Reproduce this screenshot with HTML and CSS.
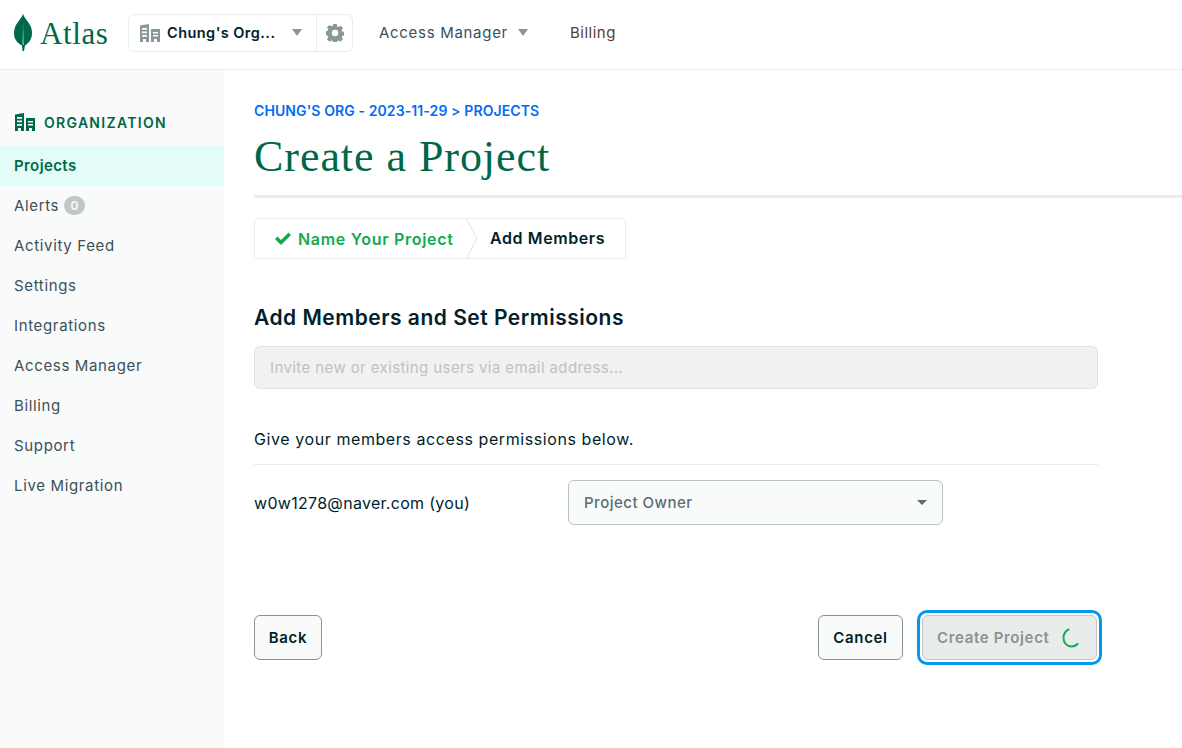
FILE: index.html
```html
<!DOCTYPE html>
<html lang="en">
<head>
<meta charset="utf-8">
<title>Create a Project</title>
<link rel="stylesheet" href="styles.css">
</head>
<body>
<svg class="defs" width="0" height="0" aria-hidden="true">
  <symbol id="building" viewBox="0 0 20 18">
    <path fill="currentColor" fill-rule="evenodd" d="M0 1.500 9 0v18H6v-3H3v3H0zM2 4v1.800h5V4zM2 7.500v1.800h5V7.500zM2 11v1.800h5V11zM11 5h9v13h-3v-3h-3v3h-3zM13 8v1.600h5V8zM13 11v1.600h5V11z"/>
  </symbol>
</svg>
<header class="topbar">
  <div class="logo">
    <svg class="leaf" width="18" height="38" viewBox="0 0 18 38">
      <path fill="#00684a" d="M9 0c1 3 3 5 5 8 3 4 4 7 4 11 0 6-3 10-7 12.500L10 37H8.500L8 31.500C3 29 0 25 0 19c0-4 1-7 4-11 2-3 4-5 5-8z"/>
      <path fill="#8fc7ae" d="M9 8l.8 23H8.500z"/>
    </svg>
    <span class="logo-text">Atlas</span>
  </div>
  <div class="org">
    <div class="org-main">
      <svg class="org-icon"><use href="#building"/></svg>
      <span class="org-name">Chung's Org...</span>
      <span class="caret"></span>
    </div>
    <div class="org-gear">
      <svg width="18" height="18" viewBox="0 0 18 18">
        <path fill="#89979b" fill-rule="evenodd" d="M7.300 0h3.400l.5 2.400 1.300.6 2.100-1.300 2.400 2.400-1.300 2.100.6 1.300 2.400.5v3.400l-2.400.5-.6 1.300 1.300 2.100-2.400 2.400-2.100-1.300-1.300.6-.5 2.400H7.300l-.5-2.400-1.300-.6-2.100 1.300-2.400-2.400 1.300-2.100-.6-1.300L-.7 10.700V7.300l2.400-.5.6-1.300L1 3.400l2.400-2.400 2.100 1.300 1.300-.6zM9 5.800a3.200 3.200 0 1 0 0 6.400 3.200 3.200 0 0 0 0-6.400z"/>
      </svg>
    </div>
  </div>
  <nav class="topnav">
    <a class="topnav-item">Access Manager <span class="caret"></span></a>
    <a class="topnav-item billing">Billing</a>
  </nav>
</header>
<div class="layout">
  <aside class="sidebar">
    <div class="side-title"><svg class="side-icon"><use href="#building"/></svg>ORGANIZATION</div>
    <a class="side-item active">Projects</a>
    <a class="side-item">Alerts <span class="badge">0</span></a>
    <a class="side-item">Activity Feed</a>
    <a class="side-item">Settings</a>
    <a class="side-item">Integrations</a>
    <a class="side-item">Access Manager</a>
    <a class="side-item">Billing</a>
    <a class="side-item">Support</a>
    <a class="side-item">Live Migration</a>
  </aside>
  <main class="content">
    <div class="crumb">CHUNG'S ORG - 2023-11-29 &gt; PROJECTS</div>
    <h1 class="title">Create a Project</h1>
    <div class="steps">
      <div class="step done">
        <svg width="16" height="13" viewBox="0 0 16 13"><path fill="#13aa52" d="M0 7l2.500-2.500L6 8l7.500-7.500L16 3 6 13z"/></svg>
        Name Your Project
      </div>
      <svg class="chevron" width="12" height="41" viewBox="0 0 12 41"><path fill="#fff" stroke="#e1e6e6" d="M0 0l11 20.500L0 41"/></svg>
      <div class="step current">Add Members</div>
    </div>
    <div class="panel">
      <h2 class="heading">Add Members and Set Permissions</h2>
      <div class="invite">Invite new or existing users via email address...</div>
      <p class="hint">Give your members access permissions below.</p>
      <div class="member">
        <span class="email">w0w1278@naver.com (you)</span>
        <div class="select">Project Owner<span class="caret small"></span></div>
      </div>
      <div class="actions">
        <button class="btn back">Back</button>
        <div class="actions-right">
          <button class="btn cancel">Cancel</button>
          <div class="ring">
            <button class="btn primary">Create Project
              <svg class="spinner" width="18" height="20" viewBox="0 0 18 20"><path fill="none" stroke="#13aa52" stroke-width="2" stroke-linecap="round" d="M6.500 1.500C3.500 3 1.500 6 1.500 10c0 5 3.500 8.500 8 8.500 2.500 0 4.500-.8 6-2.500"/></svg>
            </button>
          </div>
        </div>
      </div>
    </div>
  </main>
</div>
</body>
</html>
```
FILE: styles.css
```css
* { box-sizing: border-box; }
html, body { margin: 0; height: 100%; }
body {
  font-family: "Inter", "Liberation Sans", sans-serif;
  color: #001e2b;
  background: #fff;
  overflow: hidden;
  font-size: 15px;
}
.defs { position: absolute; }
.topbar {
  height: 70px;
  display: flex;
  align-items: center;
  border-bottom: 1px solid #e8edeb;
  padding: 0 0 4px 14px;
}
.logo { display: flex; align-items: center; width: 114px; }
.leaf { flex: none; }
.logo-text {
  font-family: "Liberation Serif", serif;
  font-size: 31px;
  letter-spacing: .6px;
  color: #00684a;
  margin-left: 8px;
  margin-top: 3px;
}
.org {
  width: 225px;
  height: 38px;
  display: flex;
  border: 1px solid #e8edeb;
  border-radius: 6px;
}
.org-main {
  flex: 1;
  display: flex;
  align-items: center;
  padding-left: 11px;
  border-right: 1px solid #e8edeb;
}
.org-icon { width: 20px; height: 18px; color: #89979b; flex: none; }
.org-name { font-size: 14.500px; font-weight: 600; letter-spacing: .45px; margin-left: 7px; width: 125px; white-space: nowrap; }
.caret {
  display: inline-block;
  width: 0;
  height: 0;
  border-left: 5.500px solid transparent;
  border-right: 5.500px solid transparent;
  border-top: 7px solid #89979b;
}
.org-gear { width: 35px; display: flex; align-items: center; justify-content: center; }
.topnav { display: flex; align-items: center; margin-left: 26px; }
.topnav-item { display: flex; align-items: center; gap: 10px; font-size: 15px; letter-spacing: .7px; color: #3d4f58; }
.topnav-item.billing { margin-left: 42px; letter-spacing: .5px; color: #5c3a2e; }
.layout { display: flex; height: 678px; }
.sidebar {
  width: 224px;
  flex: none;
  background: #f9fbfa;
  padding-top: 43px;
}
.side-title {
  display: flex;
  align-items: center;
  height: 18px;
  padding-left: 15px;
  margin-bottom: 14px;
  gap: 9px;
  font-size: 14px;
  font-weight: 600;
  letter-spacing: 1.300px;
  color: #00684a;
}
.side-icon { width: 20px; height: 18px; color: #00684a; }
.side-item {
  display: flex;
  align-items: center;
  height: 40px;
  padding-left: 14px;
  gap: 5px;
  font-size: 15px;
  letter-spacing: .65px;
  color: #3d4f58;
}
.side-item.active { background: #e3fcf7; color: #00684a; font-weight: 600; letter-spacing: .4px; }
.badge {
  width: 21px;
  height: 19px;
  border-radius: 10px;
  background: #c1c7c6;
  color: #f9fbfa;
  font-size: 12px;
  font-weight: 600;
  display: flex;
  align-items: center;
  justify-content: center;
}
.content { flex: 1; padding: 32px 0 0 30px; min-width: 0; }
.crumb { font-size: 14px; font-weight: 600; letter-spacing: .1px; color: #016bf8; line-height: 18px; }
.title {
  font-family: "Liberation Serif", serif;
  font-weight: 400;
  font-size: 44px;
  letter-spacing: .95px;
  line-height: 50px;
  color: #00684a;
  margin: 12px 0 0;
  padding-bottom: 13px;
  border-bottom: 3px solid #e8edeb;
}
.steps {
  display: inline-flex;
  align-items: stretch;
  height: 41px;
  margin-top: 20px;
  border: 1px solid #e8edeb;
  border-radius: 4px;
}
.step {
  display: flex;
  align-items: center;
  gap: 7px;
  font-size: 16px;
  font-weight: 600;
  letter-spacing: .7px;
}
.step.done { color: #13aa52; padding-left: 20px; width: 211px; }
.step.current { padding-left: 12px; width: 147px; padding-bottom: 2px; letter-spacing: .6px; }
.chevron { flex: none; margin-top: -1px; margin-bottom: -1px; }
.panel { width: 844px; margin-top: 44px; }
.heading { font-size: 21px; font-weight: 600; letter-spacing: .5px; line-height: 30px; margin: 0 0 13px; }
.invite {
  height: 43px;
  border: 1px solid #dfe3e2;
  border-radius: 6px;
  background: #f1f1f1;
  color: #bcc3c3;
  font-size: 15px;
  letter-spacing: .4px;
  display: flex;
  align-items: center;
  padding-left: 15px;
}
.hint {
  font-size: 16px;
  letter-spacing: .58px;
  line-height: 20px;
  margin: 40px 0 0;
  padding-bottom: 15px;
  border-bottom: 1px solid #e8edeb;
}
.member { display: flex; align-items: center; margin-top: 15px; }
.email { width: 314px; font-size: 16px; letter-spacing: .3px; }
.select {
  width: 375px;
  height: 45px;
  display: flex;
  align-items: center;
  justify-content: space-between;
  padding: 0 15px;
  border: 1px solid #b8c4c2;
  border-radius: 6px;
  background: #f9fbfa;
  color: #5c6c75;
  font-size: 15px;
  font-weight: 500;
  letter-spacing: .5px;
}
.caret.small { border-left-width: 5px; border-right-width: 5px; border-top-width: 5px; border-top-color: #5c6c75; }
.actions { display: flex; justify-content: space-between; margin-top: 85px; align-items: center; }
.actions-right { display: flex; align-items: center; gap: 14px; margin-right: -4px; }
.btn {
  height: 45px;
  padding: 0 14px;
  border: 1px solid #889397;
  border-radius: 6px;
  background: #f9fbfa;
  color: #001e2b;
  font: 600 15px "Inter", "Liberation Sans", sans-serif;
  letter-spacing: .65px;
  display: flex;
  align-items: center;
  justify-content: center;
}
.btn.back { width: 68px; }
.btn.cancel { width: 85px; }
.ring {
  border: 3px solid #0498ec;
  border-radius: 10px;
  padding: 2px;
  background: #fff;
}
.btn.primary {
  width: 175px;
  justify-content: flex-start;
  background: #e8edeb;
  border-color: #c1c7c6;
  color: #889397;
}
.spinner { margin-left: 13px; flex: none; }
```
